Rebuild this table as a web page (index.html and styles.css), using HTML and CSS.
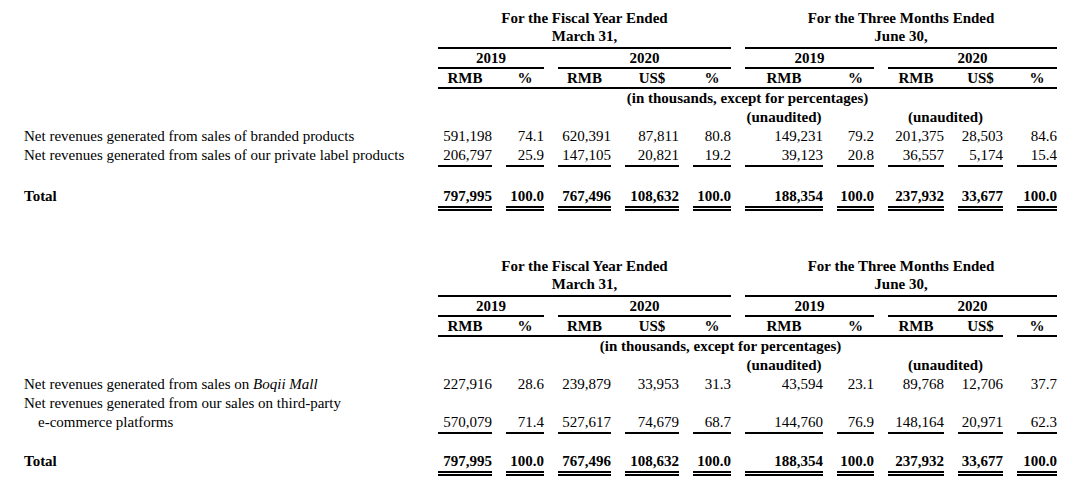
FILE: index.html
```html
<!DOCTYPE html>
<html lang="en">
<head>
<meta charset="utf-8">
<title>Net revenues</title>
<link rel="stylesheet" href="styles.css">
</head>
<body>
<div class="page">
  <section class="fin-table">
    <div class="row head">
      <div class="lbl"></div>
      <div class="hcell span5">For the Fiscal Year Ended<br>March 31,</div>
      <div class="hcell span5">For the Three Months Ended<br>June 30,</div>
    </div>
    <div class="row years">
      <div class="lbl"></div>
      <div class="ycell span2">2019</div>
      <div class="ycell span3">2020</div>
      <div class="ycell span2">2019</div>
      <div class="ycell span3">2020</div>
    </div>
    <div class="row units rule-full">
      <div class="lbl"></div>
      <div class="ucell">RMB</div><div class="ucell">%</div><div class="ucell">RMB</div><div class="ucell">US$</div><div class="ucell">%</div>
      <div class="ucell">RMB</div><div class="ucell">%</div><div class="ucell">RMB</div><div class="ucell">US$</div><div class="ucell">%</div>
    </div>
    <div class="row note">
      <div class="lbl"></div>
      <div class="bcell span10">(in thousands, except for percentages)</div>
    </div>
    <div class="row note">
      <div class="lbl"></div>
      <div class="bcell at-c6">(unaudited)</div>
      <div class="bcell at-c8-9">(unaudited)</div>
    </div>
    <div class="row data">
      <div class="lbl">Net revenues generated from sales of branded products</div>
      <div class="n">591,198</div><div class="n">74.1</div><div class="n">620,391</div><div class="n">87,811</div><div class="n">80.8</div>
      <div class="n">149,231</div><div class="n">79.2</div><div class="n">201,375</div><div class="n">28,503</div><div class="n">84.6</div>
    </div>
    <div class="row data ul">
      <div class="lbl">Net revenues generated from sales of our private label products</div>
      <div class="n">206,797</div><div class="n">25.9</div><div class="n">147,105</div><div class="n">20,821</div><div class="n">19.2</div>
      <div class="n">39,123</div><div class="n">20.8</div><div class="n">36,557</div><div class="n">5,174</div><div class="n">15.4</div>
    </div>
    <div class="row data total gap-a">
      <div class="lbl">Total</div>
      <div class="n">797,995</div><div class="n">100.0</div><div class="n">767,496</div><div class="n">108,632</div><div class="n">100.0</div>
      <div class="n">188,354</div><div class="n">100.0</div><div class="n">237,932</div><div class="n">33,677</div><div class="n">100.0</div>
    </div>
  </section>

  <section class="fin-table second">
    <div class="row head">
      <div class="lbl"></div>
      <div class="hcell span5">For the Fiscal Year Ended<br>March 31,</div>
      <div class="hcell span5">For the Three Months Ended<br>June 30,</div>
    </div>
    <div class="row years">
      <div class="lbl"></div>
      <div class="ycell span2">2019</div>
      <div class="ycell span3">2020</div>
      <div class="ycell span2">2019</div>
      <div class="ycell span3">2020</div>
    </div>
    <div class="row units rule-split">
      <div class="lbl"></div>
      <div class="ucell">RMB</div><div class="ucell">%</div><div class="ucell">RMB</div><div class="ucell">US$</div><div class="ucell">%</div>
      <div class="ucell">RMB</div><div class="ucell">%</div><div class="ucell">RMB</div><div class="ucell">US$</div><div class="ucell">%</div>
    </div>
    <div class="row note">
      <div class="lbl"></div>
      <div class="bcell span9">(in thousands, except for percentages)</div>
    </div>
    <div class="row note">
      <div class="lbl"></div>
      <div class="bcell at-c6">(unaudited)</div>
      <div class="bcell at-c8-9">(unaudited)</div>
    </div>
    <div class="row data">
      <div class="lbl">Net revenues generated from sales on <i>Boqii Mall</i></div>
      <div class="n">227,916</div><div class="n">28.6</div><div class="n">239,879</div><div class="n">33,953</div><div class="n">31.3</div>
      <div class="n">43,594</div><div class="n">23.1</div><div class="n">89,768</div><div class="n">12,706</div><div class="n">37.7</div>
    </div>
    <div class="row data ul">
      <div class="lbl">Net revenues generated from our sales on third-party<br><span class="indent">e-commerce platforms</span></div>
      <div class="n">570,079</div><div class="n">71.4</div><div class="n">527,617</div><div class="n">74,679</div><div class="n">68.7</div>
      <div class="n">144,760</div><div class="n">76.9</div><div class="n">148,164</div><div class="n">20,971</div><div class="n">62.3</div>
    </div>
    <div class="row data total gap-b">
      <div class="lbl">Total</div>
      <div class="n">797,995</div><div class="n">100.0</div><div class="n">767,496</div><div class="n">108,632</div><div class="n">100.0</div>
      <div class="n">188,354</div><div class="n">100.0</div><div class="n">237,932</div><div class="n">33,677</div><div class="n">100.0</div>
    </div>
  </section>
</div>
</body>
</html>
```

FILE: styles.css
```css
html, body {
  margin: 0;
  padding: 0;
  background: #ffffff;
}

body {
  font-family: "Liberation Serif", "Times New Roman", serif;
  font-size: 15px;
  line-height: 19px;
  color: #000000;
}

.page {
  padding: 9px 0 0 24px;
}

.fin-table.second {
  margin-top: 46px;
}

.row {
  display: grid;
  grid-template-columns: 400px 54px 38px 53px 54px 38px 78px 37px 56px 45px 40px;
  column-gap: 14px;
}

.head,
.years,
.units {
  font-weight: bold;
  line-height: 18px;
  text-align: center;
}

.span2 { grid-column: span 2; }
.span3 { grid-column: span 3; }
.span5 { grid-column: span 5; }
.span9 { grid-column: span 9; }
.span10 { grid-column: span 10; }
.at-c6 { grid-column: 7; }
.at-c8-9 { grid-column: 9 / 11; }

.hcell {
  padding-bottom: 2px;
  border-bottom: 2px solid #000;
}

.ycell {
  border-bottom: 2px solid #000;
}

.units {
  padding-bottom: 2px;
  background-repeat: no-repeat;
  background-image: linear-gradient(#000, #000);
}

.rule-full {
  background-size: 619px 2px;
  background-position: 414px 100%;
}

.rule-split {
  background-image: linear-gradient(#000, #000), linear-gradient(#000, #000);
  background-size: 565px 2px, 40px 2px;
  background-position: 414px 100%, 993px 100%;
}

.note .bcell {
  font-weight: bold;
  text-align: center;
  white-space: nowrap;
}

.data .lbl {
  align-self: end;
  white-space: nowrap;
}

.data .lbl .indent {
  padding-left: 14px;
}

.data .n {
  text-align: right;
  align-self: end;
  white-space: nowrap;
}

.data.ul .n {
  border-bottom: 2px solid #000;
}

.data.ul .lbl {
  border-bottom: 2px solid transparent;
}

.total {
  font-weight: bold;
}

.total .n {
  border-bottom: 5px double #000;
}

.total .lbl {
  border-bottom: 5px solid transparent;
}

.gap-a { margin-top: 20px; }
.gap-b { margin-top: 18px; }
```
